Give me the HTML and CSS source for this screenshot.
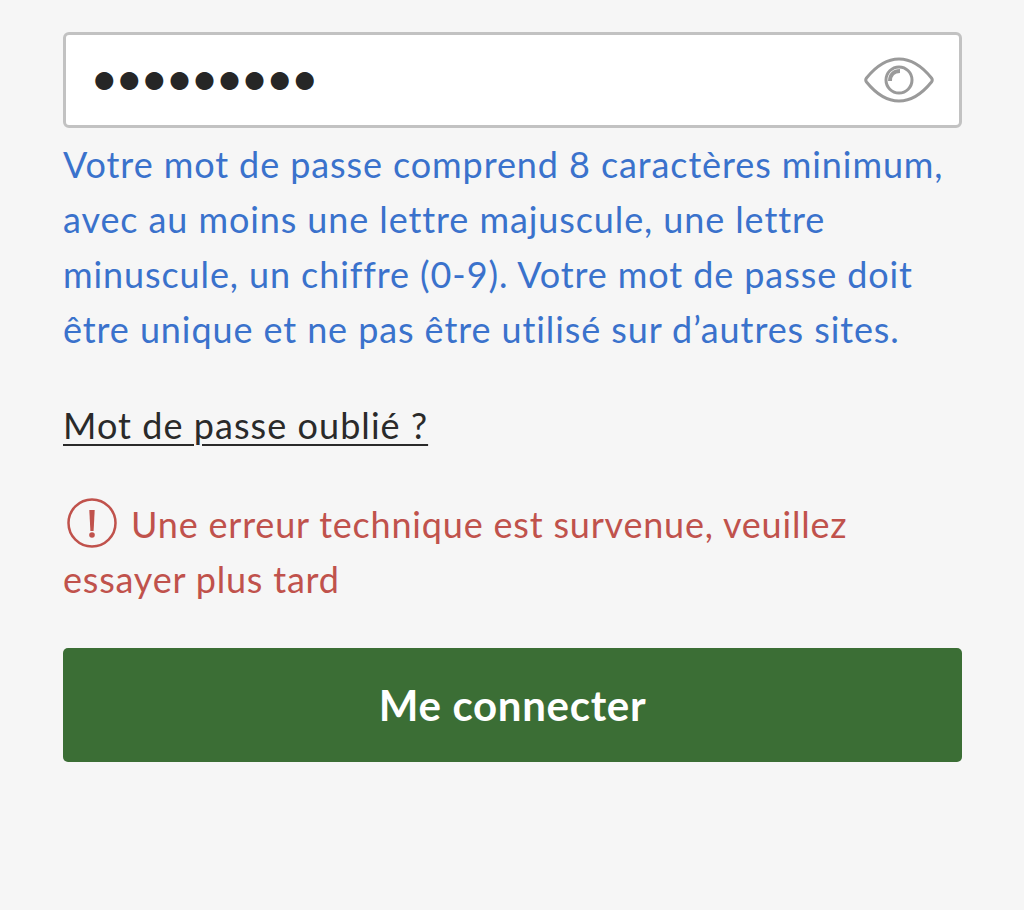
FILE: index.html
```
<!DOCTYPE html>
<html lang="fr">
<head>
<meta charset="utf-8">
<title>Connexion</title>
<link rel="stylesheet" href="styles.css">
</head>
<body>
<main class="form">
  <div class="field">
    <span class="dots">●●●●●●●●●</span>
    <svg class="eye" viewBox="0 0 70 46" width="70" height="46" fill="none" stroke="#9a9a9a" stroke-width="3">
      <path d="M2.500 21C13 8 23 2 35 2s22 6 32.500 19q1.500 2 0 4C57 38 47 44 35 44S13 38 2.500 25q-1.500-2 0-4Z"/>
      <circle cx="35" cy="23" r="13" stroke-width="3"/>
      <path d="M26 24c0-6 4-10 10-10" stroke-width="4"/>
    </svg>
  </div>
  <p class="hint">Votre mot de passe comprend 8 caractères minimum, avec au moins une lettre majuscule, une lettre minuscule, un chiffre (0-9). Votre mot de passe doit être unique et ne pas être utilisé sur d’autres sites.</p>
  <a class="forgot" href="#">Mot de passe oublié ?</a>
  <p class="error"><svg class="alert" viewBox="0 0 50 50" width="50" height="50"><circle cx="25" cy="25" r="23.500" fill="none" stroke="#c0524c" stroke-width="2.500"/><path d="M22.300 12h5.400l-1.100 21h-3.200Z" fill="#c0524c"/><circle cx="25" cy="37" r="2.800" fill="#c0524c"/></svg> Une erreur technique est survenue, veuillez essayer plus tard</p>
  <button class="submit">Me connecter</button>
</main>
</body>
</html>
```
FILE: styles.css
```
html, body { margin: 0; padding: 0; }
body { background: #f6f6f6; font-family: "Lato", "Open Sans", sans-serif; height: 910px; overflow: hidden; }
.form { display: flex; flex-direction: column; align-items: stretch; width: 899px; margin-left: 63px; padding-top: 32px; }
.field { box-sizing: border-box; height: 96px; background: #fff; border: 3px solid #c2c2c2; border-radius: 6px; display: flex; align-items: center; justify-content: space-between; padding: 0 25px 0 28px; }
.dots { font-size: 23.500px; letter-spacing: 4.550px; color: #262626; line-height: 1; font-family: "DejaVu Sans", sans-serif; }
.eye { display: block; }
.hint { margin: 9px 0 0; font-size: 36px; letter-spacing: 0.900px; line-height: 55px; color: #3a72cc; }
.forgot { align-self: flex-start; margin-top: 41px; font-size: 36px; letter-spacing: 1.050px; line-height: 55px; color: #2a2a2a; text-decoration: underline; text-decoration-thickness: 2px; text-underline-offset: 5px; }
.error { margin: 44px 0 0; font-size: 36px; letter-spacing: 0.800px; line-height: 55px; color: #c0524c; }
.alert { vertical-align: -10px; margin-left: 4px; margin-right: 4px; }
.submit { margin-top: 41px; height: 114px; border: 0; border-radius: 5px; background: #3b6e35; color: #fff; font-family: inherit; font-size: 42px; letter-spacing: 0.700px; font-weight: 700; }
```
